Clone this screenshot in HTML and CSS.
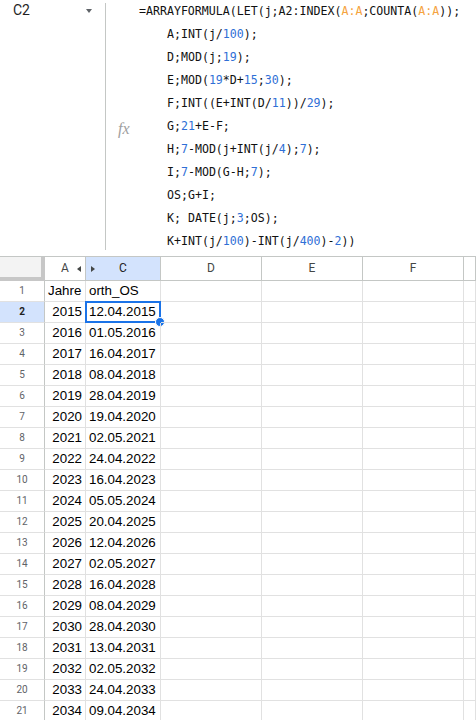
FILE: index.html
```html
<!DOCTYPE html>
<html>
  <head>
    <title>Tabelle1</title>
    <link rel="stylesheet" href="styles.css">
  </head>
  <body>
    <div class="formula-bar">
      <div class="name-box">
        <span class="cell-ref">C2</span>
        <span class="caret"></span>
      </div>
      <div class="divider"></div>
      <div class="fx-col"><span class="fx">fx</span></div>
      <div class="formula">
        <div class="line">=ARRAYFORMULA(LET(j;A2:INDEX(<span class="ref">A:A</span>;COUNTA(<span class="ref">A:A</span>));</div>
        <div class="line indent">A;INT(j/<span class="num">100</span>);</div>
        <div class="line indent">D;MOD(j;<span class="num">19</span>);</div>
        <div class="line indent">E;MOD(<span class="num">19</span>*D+<span class="num">15</span>;<span class="num">30</span>);</div>
        <div class="line indent">F;INT((E+INT(D/<span class="num">11</span>))/<span class="num">29</span>);</div>
        <div class="line indent">G;<span class="num">21</span>+E-F;</div>
        <div class="line indent">H;<span class="num">7</span>-MOD(j+INT(j/<span class="num">4</span>);<span class="num">7</span>);</div>
        <div class="line indent">I;<span class="num">7</span>-MOD(G-H;<span class="num">7</span>);</div>
        <div class="line indent">OS;G+I;</div>
        <div class="line indent">K; DATE(j;<span class="num">3</span>;OS);</div>
        <div class="line indent">K+INT(j/<span class="num">100</span>)-INT(j/<span class="num">400</span>)-<span class="num">2</span>))</div>
      </div>
    </div>

    <div class="sheet" id="sheet">
      <div class="corner"></div>
      <div class="col-head">A<span class="hide-left"></span></div>
      <div class="col-head active"><span class="hide-right"></span>C</div>
      <div class="col-head">D</div>
      <div class="col-head">E</div>
      <div class="col-head">F</div>
      <div class="col-head"></div>
    </div>

    <script>
      var rows = [
        ['Jahre', 'orth_OS'],
        [2015, '12.04.2015'], [2016, '01.05.2016'], [2017, '16.04.2017'],
        [2018, '08.04.2018'], [2019, '28.04.2019'], [2020, '19.04.2020'],
        [2021, '02.05.2021'], [2022, '24.04.2022'], [2023, '16.04.2023'],
        [2024, '05.05.2024'], [2025, '20.04.2025'], [2026, '12.04.2026'],
        [2027, '02.05.2027'], [2028, '16.04.2028'], [2029, '08.04.2029'],
        [2030, '28.04.2030'], [2031, '13.04.2031'], [2032, '02.05.2032'],
        [2033, '24.04.2033'], [2034, '09.04.2034']
      ];

      var sheet = document.getElementById('sheet');

      function cell(cls, text) {
        var el = document.createElement('div');
        el.className = cls;
        if (text !== undefined) el.textContent = text;
        sheet.appendChild(el);
        return el;
      }

      rows.forEach(function(row, i) {
        var n = i + 1;
        cell(n === 2 ? 'row-head active' : 'row-head', n);
        cell(typeof row[0] === 'number' ? 'cell num' : 'cell', row[0]);
        var c = cell('cell', row[1]);
        if (n === 2) {
          var sel = document.createElement('span');
          sel.className = 'selection';
          sel.appendChild(document.createElement('span')).className = 'handle';
          c.appendChild(sel);
        }
        cell('cell');
        cell('cell');
        cell('cell');
        cell('cell');
      });
    </script>
  </body>
</html>
```

FILE: styles.css
```css
body {margin: 0; overflow: hidden; background: #fff; font-family: "Liberation Sans", Arial, sans-serif;}

/* formula bar */
.formula-bar {display: flex; height: 256px; border-bottom: 1px solid #c4c7c5; background: #fff;}
.name-box {width: 105px; display: flex; align-items: flex-start; justify-content: space-between; box-sizing: border-box; padding: 0 13px 0 13px; height: 21px; line-height: 21px;}
.cell-ref {font-family: Roboto, sans-serif; font-size: 14px; color: #1f1f1f;}
.caret {margin-top: 9px; width: 0; height: 0; border-left: 3.5px solid transparent; border-right: 3.5px solid transparent; border-top: 4px solid #5f6368;}
.divider {width: 1px; margin: 3px 0 6px 0; background: #c4c7c5;}
.fx-col {width: 33px; display: flex; align-items: center; box-sizing: border-box; padding-left: 12px;}
.fx {font-family: "Liberation Serif", serif; font-style: italic; font-size: 16px; color: #a0a0a0; margin-top: 2px;}
.formula {font-family: "DejaVu Sans Mono", monospace; font-size: 11.6px; line-height: 23px; color: #111;}
.formula .line {white-space: nowrap; height: 23px;}
.formula .indent {padding-left: 28px;}
.formula .num {color: #2f6fd6;}
.formula .ref {color: #f5a340;}

/* grid */
.sheet {display: grid; grid-template-columns: 45px 41px 75px 101px 101px 101px 1fr; grid-template-rows: 24px; grid-auto-rows: 21px;}
.sheet > div {box-sizing: border-box; position: relative;}
.corner {background: #f3f3f3; border-right: 4px solid #c7c7c7; border-bottom: 4px solid #c7c7c7;}
.col-head {border-right: 1px solid #c4c7c5; border-bottom: 1px solid #c4c7c5; text-align: center; font-family: Roboto, sans-serif; font-size: 12px; line-height: 23px; color: #444746;}
.col-head.active {background: #d3e3fd; color: #1f1f1f;}
.hide-left {position: absolute; right: 4px; top: 9px; border-top: 3px solid transparent; border-bottom: 3px solid transparent; border-right: 4px solid #444746;}
.hide-right {position: absolute; left: 5px; top: 9px; border-top: 3px solid transparent; border-bottom: 3px solid transparent; border-left: 4px solid #444746;}
.row-head {border-right: 1px solid #c4c7c5; border-bottom: 1px solid #e1e1e1; text-align: center; font-family: Roboto, sans-serif; font-size: 10px; line-height: 20px; color: #5f6368;}
.row-head.active {background: #d3e3fd; color: #1f1f1f; font-weight: bold;}
.cell {border-right: 1px solid #e1e1e1; border-bottom: 1px solid #e1e1e1; font-size: 13.33px; line-height: 20px; padding: 0 3px; color: #000; white-space: nowrap; overflow: visible;}
.cell.num {text-align: right;}

/* active cell outline */
.selection {position: absolute; left: -1px; top: -1px; right: -1px; bottom: -1px; border: 2px solid #1a73e8;}
.handle {position: absolute; right: -6px; bottom: -6px; width: 8px; height: 8px; border-radius: 50%; background: #1a73e8; border: 1px solid #fff;}
```
